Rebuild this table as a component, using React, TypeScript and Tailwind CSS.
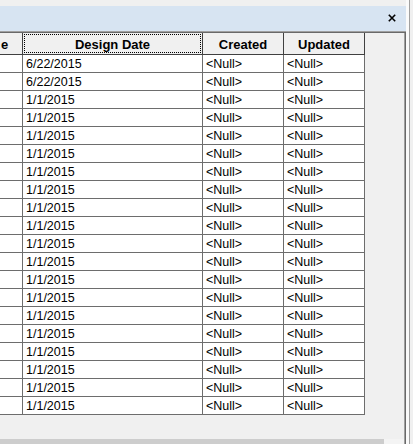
const rows = [
  "6/22/2015",
  "6/22/2015",
  ...Array.from({ length: 18 }, () => "1/1/2015"),
];

function App() {
  return (
    <div
      className="flex h-[444px] w-[413px] overflow-hidden bg-[#f0f0f0] text-black"
      style={{ fontFamily: '"Liberation Sans", Arial, sans-serif' }}
    >
      <div className="flex w-[406px] flex-col">
        <div className="h-[6px]" />
        <div className="flex h-[25px] items-start justify-end bg-[#d7e4f2] pr-[10px] pt-[8px]">
          <svg width="8" height="8" viewBox="0 0 8 8">
            <path d="M0.8 0.8 L7.2 7.2 M7.2 0.8 L0.8 7.2" stroke="#000" strokeWidth="1.6" />
          </svg>
        </div>
        <div className="h-[1px] bg-[#a0a0a0]" />
        <div className="h-[1px] bg-[#696969]" />

        <div className="flex flex-1">
          <div className="flex w-[404px] flex-col">
            <div className="flex-1">
              {/* header */}
              <div className="flex h-[22px] w-[365px] text-[13px] font-bold leading-[20px]">
                <div className="w-[23px] overflow-hidden border-b border-r border-[#404040] bg-[#f0f0f0] pl-[1px] pt-[2px]">
                  e
                </div>
                <div className="w-[180px] border-b border-r border-[#404040] bg-[#f0f0f0] p-[1px]">
                  <div className="flex h-[19px] items-center justify-center border border-dotted border-black pt-[2px] leading-[16px]">
                    Design Date
                  </div>
                </div>
                <div className="w-[81px] border-b border-r border-[#404040] bg-[#f0f0f0] pt-[2px] text-center">
                  Created
                </div>
                <div className="w-[81px] border-b border-r border-[#404040] bg-[#f0f0f0] pt-[2px] text-center">
                  Updated
                </div>
              </div>

              {rows.map((date, i) => (
                <div key={i} className="flex h-[18px] w-[365px] text-[12.5px] leading-[16px]">
                  <div className="w-[23px] border-b border-r border-[#6d6d6d] bg-white" />
                  <div className="w-[180px] border-b border-r border-[#6d6d6d] bg-white pl-[3px] pt-[1px]">{date}</div>
                  <div className="w-[81px] border-b border-r border-[#6d6d6d] bg-white pl-[3px] pt-[1px]">&lt;Null&gt;</div>
                  <div className="w-[81px] border-b border-r border-[#6d6d6d] bg-white pl-[3px] pt-[1px]">&lt;Null&gt;</div>
                </div>
              ))}
            </div>

            <div className="flex h-[5px]">
              <div className="w-[384px] bg-[#cdcdcd]" />
              <div className="flex-1 bg-[#f4f4f4]" />
            </div>
          </div>
          <div className="w-[1px] bg-[#a0a0a0]" />
          <div className="w-[1px] bg-[#696969]" />
        </div>
      </div>

      <div className="flex w-[7px]">
        <div className="w-[3px] bg-[#fafafa]" />
        <div className="w-[1px] bg-[#a0a0a0]" />
        <div className="flex-1 bg-[#f0f0f0]" />
      </div>
    </div>
  );
}

export default App;
